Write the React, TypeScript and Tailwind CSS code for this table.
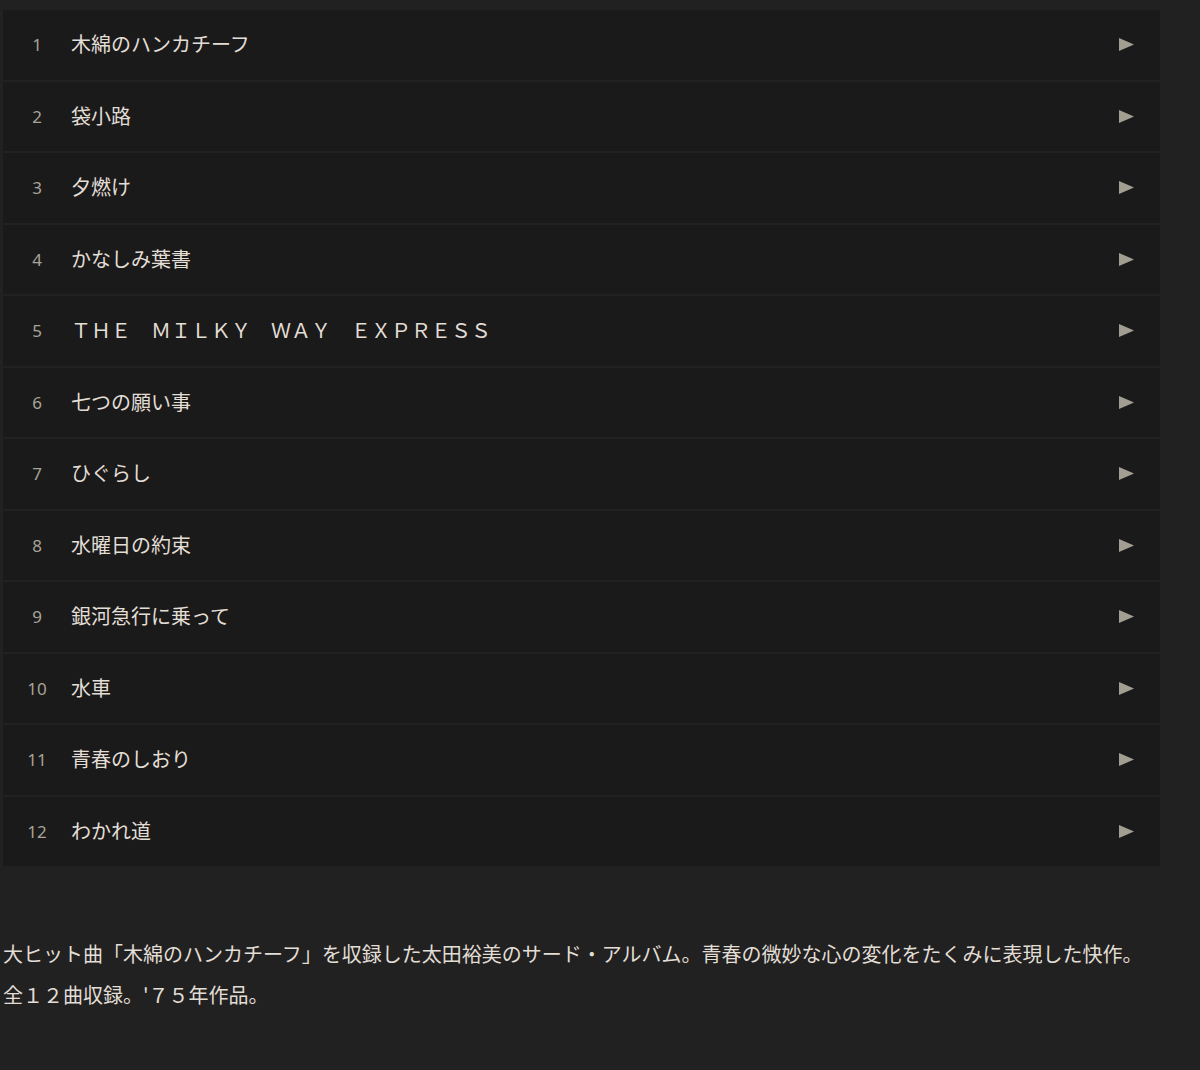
const tracks = [
  "木綿のハンカチーフ",
  "袋小路",
  "夕燃け",
  "かなしみ葉書",
  "ＴＨＥ　ＭＩＬＫＹ　ＷＡＹ　ＥＸＰＲＥＳＳ",
  "七つの願い事",
  "ひぐらし",
  "水曜日の約束",
  "銀河急行に乗って",
  "水車",
  "青春のしおり",
  "わかれ道",
];

function PlayIcon() {
  return (
    <svg width="15" height="13" viewBox="0 0 15 13" className="shrink-0">
      <polygon points="0,0 15,6.5 0,13" fill="#a39e92" />
    </svg>
  );
}

function TrackRow({ no, title }: { no: number; title: string }) {
  return (
    <div className="h-[69.5px] flex items-center bg-[#1a1a1a]">
      <span className="w-[68px] text-center text-[17px] text-[#a8a398] font-['Noto_Sans',sans-serif]">
        {no}
      </span>
      <span className="grow text-[20px] text-[#e2ded6] font-['Noto_Sans_CJK_JP',sans-serif] -mt-[1px]">
        {title}
      </span>
      <div className="w-[68px] flex justify-center">
        <PlayIcon />
      </div>
    </div>
  );
}

export default function App() {
  return (
    <div className="min-h-[1070px] bg-[#212121] pt-[10px] pl-[3px] font-['Noto_Sans_CJK_JP',sans-serif]">
      <div className="w-[1157px] flex flex-col gap-[2px]">
        {tracks.map((title, idx) => (
          <TrackRow key={idx} no={idx + 1} title={title} />
        ))}
      </div>
      <p className="mt-[67px] text-[20px] leading-[41px] text-[#e2ded6] whitespace-pre-line">
        {
          "大ヒット曲「木綿のハンカチーフ」を収録した太田裕美のサード・アルバム。青春の微妙な心の変化をたくみに表現した快作。\n全１２曲収録。'７５年作品。"
        }
      </p>
    </div>
  );
}
